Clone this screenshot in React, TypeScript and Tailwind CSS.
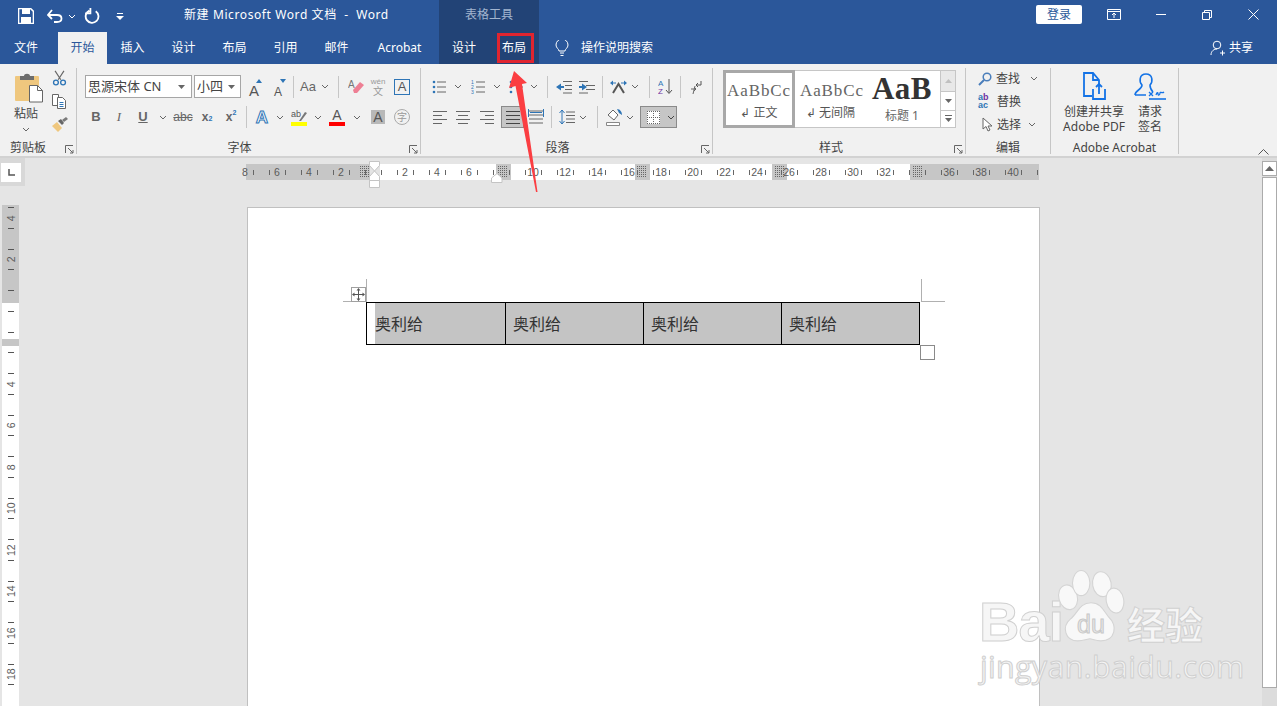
import React from "react";

const Chev = ({ c = "#666" }: { c?: string }) => (
  <svg width="8" height="5" viewBox="0 0 8 5" className="shrink-0"><path d="M1 1l3 3 3-3" fill="none" stroke={c} strokeWidth="1" /></svg>
);
const Launcher = () => (
  <svg width="9" height="9" viewBox="0 0 9 9" className="shrink-0"><path d="M.5 8V.5H8M3 3l5 5M8 5v3H5" fill="none" stroke="#666" strokeWidth="1" /></svg>
);
const VDiv = () => <div className="w-px h-[22px] bg-[#c6c6c6]" />;
const Lines = ({ rows, c = "#666" }: { rows: number[][]; c?: string }) => (
  <svg width="16" height="16" viewBox="0 0 16 16" className="shrink-0">
    {rows.map((r, i) => <rect key={i} x={r[0]} y={r[1]} width={r[2]} height="1" fill={c} />)}
  </svg>
);
const FA = ({ size = "text-[15px]" }: { size?: string }) => (
  <span className={`${size} leading-none text-[#555] font-['Liberation_Sans',sans-serif]`}>A</span>
);

const GridMark = () => (
  <svg width="10" height="11" viewBox="0 0 10 11" className="shrink-0">
    {[0, 2, 4, 6, 8, 10].map((y) => <line key={"h" + y} x1="0" x2="10" y1={y + 0.5} y2={y + 0.5} stroke="#555" strokeWidth="1" strokeDasharray="1 1" />)}
    {[0, 2, 4, 6, 8].map((x) => <line key={"v" + x} y1="0" y2="11" x1={x + 0.5} x2={x + 0.5} stroke="#666" strokeWidth="1" strokeDasharray="1 1" />)}
  </svg>
);

const hNums = ["8", "6", "4", "2", "", "2", "4", "6", "", "10", "12", "14", "16", "18", "20", "22", "24", "26", "28", "30", "32", "", "36", "38", "40", ""];

function HRuler() {
  return (
    <div className="relative ml-[221px] mt-[6px] w-[793px] h-[16px] flex">
      <div className="w-[124px] bg-[#c6c6c6]" />
      <div className="w-[10px] bg-[#e4e4e4]" />
      <div className="w-[116px] bg-white" />
      <div className="w-[15px] bg-[#c6c6c6]" />
      <div className="w-[124px] bg-white" />
      <div className="w-[15px] bg-[#c6c6c6]" />
      <div className="w-[122px] bg-white" />
      <div className="w-[15px] bg-[#c6c6c6]" />
      <div className="w-[123px] bg-white" />
      <div className="w-[129px] bg-[#c6c6c6]" />
      <div className="absolute inset-0 flex">
        <div className="flex -ml-[17px] shrink-0">
          {hNums.map((n, i) => (
            <div key={i} className="w-[32px] shrink-0 flex items-center justify-between h-[16px]">
              <span className={`w-px h-[5px] ml-[7.5px] ${i === 0 ? "bg-transparent" : "bg-[#666]"}`} />
              <span className="text-[10.5px] leading-none text-[#5a5a5a] font-['Liberation_Sans',sans-serif]">{n}</span>
              <span className={`w-px h-[5px] mr-[7.5px] ${i === hNums.length - 1 ? "bg-transparent" : "bg-[#666]"}`} />
            </div>
          ))}
        </div>
      </div>
      <div className="absolute left-[114px] top-[2px]"><GridMark /></div>
      <div className="absolute left-[252px] top-[2px]"><GridMark /></div>
      <div className="absolute left-[391px] top-[2px]"><GridMark /></div>
      <div className="absolute left-[529px] top-[2px]"><GridMark /></div>
      <div className="absolute left-[667px] top-[2px]"><GridMark /></div>
      <svg className="absolute left-[123px] -top-[3px]" width="12" height="28" viewBox="0 0 12 28">
        <path d="M.5.5h10v4L5.500 10 .5 4.500zM5.500 10l5 5.500v4H.5v-4zM.5 19.500h10v7H.5z" fill="#fff" stroke="#c4c4c4" />
      </svg>
      <svg className="absolute left-[245px] top-[9px]" width="12" height="10" viewBox="0 0 12 10">
        <path d="M.5 9.500V5L6 .5 11 5v4.500z" fill="#fff" stroke="#c4c4c4" />
      </svg>
    </div>
  );
}

const vNums = ["4", "2", "", "", "4", "6", "8", "10", "12", "14", "16", "18"];
function VRuler() {
  return (
    <div className="relative ml-[2px] mt-[19px] w-[17px] h-[501px] flex flex-col overflow-hidden">
      <div className="h-[98px] bg-[#c6c6c6] shrink-0" />
      <div className="h-[36px] bg-white shrink-0" />
      <div className="h-[7px] bg-[#c6c6c6] shrink-0" />
      <div className="flex-1 bg-white" />
      <div className="absolute inset-x-0 -top-[8px] flex flex-col">
        {vNums.map((n, i) => (
          <div key={i} className="h-[41.5px] shrink-0 flex flex-col items-center justify-between py-[10px]">
            <span className="w-[6px] h-px bg-[#555]" />
            <span className="text-[10.5px] leading-none text-[#5a5a5a] -rotate-90 font-['Liberation_Sans',sans-serif]">{n}</span>
            <span className="w-[6px] h-px bg-[#555]" />
          </div>
        ))}
      </div>
    </div>
  );
}

function Group({ w, label, launcher, children, labelClass = "" }: { w: string; label: string; launcher?: boolean; children: React.ReactNode; labelClass?: string }) {
  return (
    <div className={`${w} shrink-0 h-[86px] mt-[4px] border-r border-[#c6c6c6] flex flex-col relative`}>
      <div className="h-[70px] shrink-0">{children}</div>
      <div className={`h-[20px] shrink-0 flex items-center justify-center text-[12px] text-[#444] ${labelClass}`}>{label}</div>
      {launcher && <div className="absolute right-[2px] bottom-0 flex"><Launcher /></div>}
    </div>
  );
}

function Clipboard() {
  return (
    <div className="flex h-full">
      <div className="w-[44px] ml-[4px] flex flex-col items-center">
        <svg width="30" height="31" viewBox="0 0 30 31" className="mt-[4px] ml-[6px] shrink-0">
          <rect x="1" y="4" width="24" height="25" rx="1" fill="#efc77e" />
          <path d="M6 4h4c0-3 6-3 6 0h4v4H6z" fill="#6d6d6d" />
          <path d="M15.500 13.500h8l5 5v11.500h-13z" fill="#fff" stroke="#666" />
          <path d="M23.500 13.500v5h5" fill="none" stroke="#666" />
        </svg>
        <span className="text-[12px] leading-[16px] text-[#444] mt-[3px]">粘贴</span>
        <div className="mt-[5px] flex"><Chev /></div>
      </div>
      <div className="w-[20px] flex flex-col items-center ml-px">
        <svg width="15" height="16" viewBox="0 0 16 18" className="mt-[2px] shrink-0">
          <path d="M3 1l6.500 10M13 1L6.500 11" stroke="#666" strokeWidth="1.300" fill="none" />
          <circle cx="4" cy="14" r="2.700" fill="none" stroke="#2e75b6" strokeWidth="1.500" />
          <circle cx="12" cy="14" r="2.700" fill="none" stroke="#2e75b6" strokeWidth="1.500" />
        </svg>
        <svg width="16" height="16" viewBox="0 0 16 16" className="mt-[7px] shrink-0">
          <path d="M1.500 1.500h6v11h-6z" fill="#fff" stroke="#666" />
          <path d="M6.500 4.500h5l3 3v8h-8z" fill="#fff" stroke="#666" />
          <path d="M8.500 9.500h4M8.500 11.500h4M8.500 13.500h4" stroke="#2e75b6" />
        </svg>
        <svg width="17" height="15" viewBox="0 0 17 15" className="mt-[8px] shrink-0">
          <path d="M1 9l5-4 5 6-4 4z" fill="#efc77e" />
          <path d="M7 4l3-2 3 4-2 2z" fill="#666" />
          <path d="M11 3l4-3 2 2-4 3z" fill="#7a7a7a" />
        </svg>
      </div>
    </div>
  );
}

function FontGroup() {
  return (
    <div className="flex flex-col pl-[8px]">
      <div className="flex items-center h-[23px] mt-[7px]">
        <div className="w-[107px] h-[23px] border border-[#a6a6a6] bg-white flex items-center justify-between pl-[2px] pr-[6px] text-[13px] text-[#444]">
          <span>思源宋体 CN</span>
          <svg width="7" height="4" viewBox="0 0 7 4"><path d="M0 0h7L3.500 4z" fill="#666" /></svg>
        </div>
        <div className="w-[47px] ml-[2px] h-[23px] border border-[#a6a6a6] bg-white flex items-center justify-between pl-[2px] pr-[5px] text-[13px] text-[#444]">
          <span>小四</span>
          <svg width="7" height="4" viewBox="0 0 7 4"><path d="M0 0h7L3.500 4z" fill="#666" /></svg>
        </div>
        <div className="w-[1px]" />
        <div className="w-[24px] h-[22px] flex items-end justify-center relative"><FA size="text-[15px]" /><svg className="absolute right-[4px] top-[3px]" width="6" height="4" viewBox="0 0 6 4"><path d="M0 4l3-4 3 4z" fill="#2e75b6" /></svg></div>
        <div className="w-[24px] h-[22px] flex items-end justify-center relative"><FA size="text-[12px]" /><svg className="absolute right-[4px] top-[3px]" width="6" height="4" viewBox="0 0 6 4"><path d="M0 0l3 4 3-4z" fill="#2e75b6" /></svg></div>
        <div className="w-[6px] flex justify-center"><VDiv /></div>
        <div className="w-[24px] flex justify-center text-[13px] text-[#666] font-['Liberation_Sans',sans-serif]">Aa</div>
        <div className="w-[10px] flex justify-center"><Chev /></div>
        <div className="w-[16px] flex justify-center"><VDiv /></div>
        <div className="w-[20px] flex justify-center">
          <svg width="16" height="17" viewBox="0 0 16 17"><text x="0" y="10" fontSize="10" fill="#777" fontFamily="Liberation Sans">A</text><path d="M5 12l7-8 4 3-7 8H6z" fill="#ee7f94" /></svg>
        </div>
        <div className="w-[24px] flex flex-col items-center leading-none text-[#999]">
          <span className="text-[8px] leading-[9px] font-['Liberation_Sans',sans-serif]">wén</span>
          <span className="text-[10px] leading-[11px]">文</span>
        </div>
        <div className="w-[24px] flex justify-center">
          <div className="w-[16px] h-[16px] border border-[#2e75b6] flex items-center justify-center"><FA size="text-[13px]" /></div>
        </div>
      </div>
      <div className="flex items-center h-[22px] mt-[8px] text-[#666]">
        <div className="w-[22px] flex justify-center text-[13px] font-bold font-['Liberation_Sans',sans-serif]">B</div>
        <div className="w-[24px] flex justify-center text-[13px] italic font-['Liberation_Serif',serif]">I</div>
        <div className="w-[24px] flex justify-center text-[13px] font-bold underline font-['Liberation_Sans',sans-serif]">U</div>
        <div className="w-[16px] flex justify-center"><Chev /></div>
        <div className="w-[24px] flex justify-center text-[12px] line-through font-['Liberation_Sans',sans-serif]">abc</div>
        <div className="w-[24px] flex justify-center items-baseline text-[12px] font-bold font-['Liberation_Sans',sans-serif]">x<span className="text-[7px] text-[#2e75b6]">2</span></div>
        <div className="w-[24px] flex justify-center items-start text-[12px] font-bold font-['Liberation_Sans',sans-serif]">x<span className="text-[7px] text-[#2e75b6]">2</span></div>
        <div className="w-[7px] flex justify-center"><VDiv /></div>
        <div className="w-[24px] flex justify-center">
          <span className="text-[17px] leading-none font-bold text-white [-webkit-text-stroke:1px_#2e75b6] font-['Liberation_Sans',sans-serif]">A</span>
        </div>
        <div className="w-[12px] flex justify-center"><Chev /></div>
        <div className="w-[26px] flex flex-col items-center">
          <svg width="16" height="13" viewBox="0 0 16 13"><text x="0" y="8" fontSize="9" fill="#555" fontFamily="Liberation Sans">ab</text><path d="M8 12l6-9 2 1-6 8z" fill="#777" /></svg>
          <div className="w-[16px] h-[4px] bg-[#ffff00]" />
        </div>
        <div className="w-[12px] flex justify-center"><Chev /></div>
        <div className="w-[26px] flex flex-col items-center">
          <span className="text-[14px] leading-[13px] font-['Liberation_Sans',sans-serif] text-[#555]">A</span>
          <div className="w-[16px] h-[4px] bg-[#ff0000]" />
        </div>
        <div className="w-[14px] flex justify-center"><Chev /></div>
        <div className="w-[28px] flex justify-center">
          <div className="w-[14px] h-[14px] bg-[#b8b8b8] flex items-center justify-center"><FA size="text-[14px]" /></div>
        </div>
        <div className="w-[20px] flex justify-center">
          <div className="w-[16px] h-[16px] rounded-full border border-[#aaa] flex items-center justify-center text-[10px] text-[#999]">字</div>
        </div>
      </div>
    </div>
  );
}

const blueDots = (
  <>
    <circle cx="2" cy="3" r="1.300" fill="#2e75b6" /><circle cx="2" cy="8" r="1.300" fill="#2e75b6" /><circle cx="2" cy="13" r="1.300" fill="#2e75b6" />
  </>
);

function ParaGroup() {
  return (
    <div className="flex flex-col pl-[8px]">
      <div className="flex items-center h-[23px] mt-[7px]">
        <div className="w-[20px] flex justify-center"><svg width="14" height="16" viewBox="0 0 14 16">{blueDots}<path d="M5 3h9M5 8h9M5 13h9" stroke="#666" /></svg></div>
        <div className="w-[18px] flex justify-center"><Chev /></div>
        <div className="w-[22px] flex justify-center"><svg width="14" height="16" viewBox="0 0 14 16"><path d="M5 3h9M5 8h9M5 13h9" stroke="#666" /><text x="0" y="5" fontSize="5" fill="#2e75b6" fontFamily="Liberation Sans">1</text><text x="0" y="10" fontSize="5" fill="#2e75b6" fontFamily="Liberation Sans">2</text><text x="0" y="15" fontSize="5" fill="#2e75b6" fontFamily="Liberation Sans">3</text></svg></div>
        <div className="w-[16px] flex justify-center"><Chev /></div>
        <div className="w-[22px] flex justify-center"><svg width="14" height="16" viewBox="0 0 14 16">{blueDots}<path d="M5 3h9M7 8h7M9 13h5" stroke="#666" /></svg></div>
        <div className="w-[14px] flex justify-center"><Chev /></div>
        <div className="w-[12px] flex justify-center"><VDiv /></div>
        <div className="w-[22px] flex justify-center"><svg width="16" height="14" viewBox="0 0 16 14"><path d="M7 1.500h9M9 5.500h7M9 9.500h7M7 13h9" stroke="#666" /><path d="M0 7l5-3.500v2.500h3v2H5v2.500z" fill="#2e75b6" /></svg></div>
        <div className="w-[24px] flex justify-center"><svg width="16" height="14" viewBox="0 0 16 14"><path d="M0 1.500h9M7 5.500h9M7 9.500h9M0 13h9" stroke="#666" /><path d="M8 7L3 3.500v2.500H0v2h3v2.500z" fill="#2e75b6" /></svg></div>
        <div className="w-[6px] flex justify-center"><VDiv /></div>
        <div className="w-[26px] flex justify-center"><svg width="17" height="14" viewBox="0 0 17 14"><path d="M3 13L8.500 4 14 13" fill="none" stroke="#555" strokeWidth="2" /><path d="M0 3l3-2.500v5zM17 3l-3-2.500v5z" fill="#2e75b6" /><path d="M3 3h3M11 3h3" stroke="#2e75b6" /></svg></div>
        <div className="w-[8px] flex justify-center"><Chev /></div>
        <div className="w-[20px] flex justify-center"><VDiv /></div>
        <div className="w-[12px] flex justify-center"><svg width="15" height="16" viewBox="0 0 15 16" className="shrink-0"><text x="0" y="7" fontSize="8" fill="#2e75b6" fontFamily="Liberation Sans">A</text><text x="0" y="15" fontSize="8" fill="#7030a0" fontFamily="Liberation Sans">Z</text><path d="M11 0v14M8 11l3 3.500 3-3.500" fill="none" stroke="#555" /></svg></div>
        <div className="w-[18px] flex justify-center"><VDiv /></div>
        <div className="w-[14px] flex justify-center"><svg width="12" height="14" viewBox="0 0 12 14" className="shrink-0"><path d="M11 1v4H6M8 3L6 5l2 2" fill="none" stroke="#555" /><path d="M1 9h5M4 7l2 2-2 2M5 6L3 14" fill="none" stroke="#666" /></svg></div>
      </div>
      <div className="flex items-center h-[22px] mt-[8px]">
        <div className="w-[22px] flex justify-center"><Lines rows={[[1, 2, 14], [1, 6, 9], [1, 10, 14], [1, 14, 9]]} /></div>
        <div className="w-[24px] flex justify-center"><Lines rows={[[1, 2, 14], [3, 6, 10], [1, 10, 14], [3, 14, 10]]} /></div>
        <div className="w-[24px] flex justify-center"><Lines rows={[[1, 2, 14], [6, 6, 9], [1, 10, 14], [6, 14, 9]]} /></div>
        <div className="w-[2px]" />
        <div className="w-[23px] h-[22px] bg-[#c6c6c6] border border-[#8a8a8a] flex items-center justify-center"><Lines c="#444" rows={[[1, 2, 14], [1, 6, 14], [1, 10, 14], [1, 14, 14]]} /></div>
        <div className="w-[24px] flex justify-center"><svg width="16" height="16" viewBox="0 0 16 16"><path d="M1 2h14M1 6h14M1 10h14M1 14h14" stroke="#666" /><path d="M.5 0v8M15.500 0v8M2 3.500h12" stroke="#2e75b6" /></svg></div>
        <div className="w-[7px] flex justify-center"><VDiv /></div>
        <div className="w-[24px] flex justify-center"><svg width="16" height="16" viewBox="0 0 16 16"><path d="M7 3h9M7 6.500h9M7 10h9M7 13.500h9" stroke="#666" /><path d="M3 1v14M.5 4L3 1l2.500 3M.5 12L3 15l2.500-3" fill="none" stroke="#2e75b6" /></svg></div>
        <div className="w-[8px] flex justify-center"><Chev /></div>
        <div className="w-[20px] flex justify-center"><VDiv /></div>
        <div className="w-[14px] flex justify-center"><svg width="17" height="18" viewBox="0 0 17 18" className="shrink-0"><path d="M2 7l5-5 5 5-4 5z" fill="#fff" stroke="#666" /><path d="M11 1c3 0 5 3 5 6l-3-2z" fill="#2e75b6" /><path d="M.5 14.500h13v3H.5z" fill="#fff" stroke="#888" /></svg></div>
        <div className="w-[18px] flex justify-center"><Chev /></div>
        <div className="w-[1px]" />
        <div className="w-[37px] h-[22px] bg-[#c6c6c6] border border-[#8a8a8a] flex items-center">
          <div className="w-[25px] flex justify-center"><svg width="13" height="13" viewBox="0 0 13 13"><rect width="13" height="13" fill="#fff" /><path d="M.5 0v13M6.500 0v13M12.500 0v13M0 .5h13M0 6.500h13M0 12.500h13" stroke="#666" strokeDasharray="1 1" /></svg></div>
          <div className="w-[10px] flex justify-center ml-px"><Chev c="#444" /></div>
        </div>
      </div>
    </div>
  );
}

function StylesGroup() {
  return (
    <div className="pl-[10px] pt-[2px]">
      <div className="w-[233px] h-[58px] border border-[#c6c6c6] bg-white flex">
        <div className="w-[72px] h-[58px] -mt-px -ml-px border-[3px] border-[#a8a8a8] shrink-0 flex flex-col items-center overflow-hidden">
          <span className="text-[17px] leading-[20px] mt-[8px] text-[#666] tracking-[0.9px] whitespace-nowrap font-['Liberation_Serif',serif]">AaBbCc</span>
          <span className="text-[12px] leading-[16px] mt-[4px] text-[#555] whitespace-nowrap">↲ 正文</span>
        </div>
        <div className="w-[71px] shrink-0 flex flex-col items-center overflow-hidden">
          <span className="text-[17px] leading-[20px] mt-[10px] ml-[5px] self-start text-[#666] tracking-[0.9px] whitespace-nowrap font-['Liberation_Serif',serif]">AaBbCc</span>
          <span className="text-[12px] leading-[16px] mt-[4px] text-[#555] whitespace-nowrap">↲ 无间隔</span>
        </div>
        <div className="w-[72px] shrink-0 flex flex-col items-center overflow-hidden">
          <span className="text-[31px] leading-[32px] mt-[2px] font-bold text-[#333] tracking-[0.5px] font-['Liberation_Serif',serif]">AaB</span>
          <span className="text-[12px] leading-[16px] mt-[3px] text-[#666]">标题 1</span>
        </div>
        <div className="w-[15px] ml-auto shrink-0 border-l border-[#c6c6c6] flex flex-col">
          <div className="h-[21px] bg-[#e8e8e8] flex items-center justify-center"><svg width="7" height="4" viewBox="0 0 7 4"><path d="M0 4l3.500-4L7 4z" fill="#c0c0c0" /></svg></div>
          <div className="h-[19px] border-t border-[#c6c6c6] flex items-center justify-center"><svg width="7" height="4" viewBox="0 0 7 4"><path d="M0 0l3.500 4L7 0z" fill="#666" /></svg></div>
          <div className="h-[18px] border-t border-[#c6c6c6] flex items-center justify-center"><svg width="7" height="7" viewBox="0 0 7 7"><path d="M0 .5h7" stroke="#666" /><path d="M0 3l3.500 4L7 3z" fill="#666" /></svg></div>
        </div>
      </div>
    </div>
  );
}

function EditingGroup() {
  return (
    <div className="flex flex-col pl-[12px] text-[12px] text-[#444]">
      <div className="h-[23px] flex items-center mt-[-1px]">
        <svg width="14" height="14" viewBox="0 0 14 14" className="shrink-0"><circle cx="9" cy="5" r="3.800" fill="none" stroke="#4a7ebb" strokeWidth="1.500" /><path d="M6 8l-5 5" stroke="#4a7ebb" strokeWidth="2" /></svg>
        <span className="ml-[4px] w-[34px]">查找</span>
        <Chev />
      </div>
      <div className="h-[23px] flex items-center">
        <div className="w-[16px] flex flex-col text-[9px] font-bold font-['Liberation_Sans',sans-serif]">
          <span className="leading-[7px]"><span className="text-[#2e75b6]">a</span><span className="text-[#7030a0]">b</span></span>
          <span className="leading-[8px] text-[#2e75b6]">ac</span>
        </div>
        <span className="ml-[3px]">替换</span>
      </div>
      <div className="h-[23px] flex items-center">
        <svg width="11" height="15" viewBox="0 0 11 15" className="shrink-0 ml-[4px]"><path d="M1 1v11l3-2.500L6 14l2-1-2-4h4z" fill="#fff" stroke="#666" /></svg>
        <span className="ml-[4px] w-[31px]">选择</span>
        <Chev />
      </div>
    </div>
  );
}

function AcrobatGroup() {
  return (
    <div className="flex pl-[8px] text-[12px] leading-[15px] text-[#444] text-center">
      <div className="w-[70px] flex flex-col items-center">
        <svg width="24" height="28" viewBox="0 0 24 28" className="mt-[4px] shrink-0">
          <path d="M10 24H2V1h9l6 7v4M11 1v7h6" fill="none" stroke="#1473e6" strokeWidth="1.800" />
          <path d="M11 17v10h12V17M17 22v-9M14 15l3-3 3 3" fill="none" stroke="#1473e6" strokeWidth="1.800" />
        </svg>
        <span className="mt-[4px] whitespace-nowrap">创建并共享</span>
        <span className="whitespace-nowrap">Adobe PDF</span>
      </div>
      <div className="w-[42px] flex flex-col items-center">
        <svg width="32" height="28" viewBox="0 0 32 28" className="mt-[4px] shrink-0">
          <path d="M1 23c0-5 7-5 7-10-3-3-3-11 4-11s7 8 4 11c0 3 1 5 3 7M1 23h11" fill="none" stroke="#1473e6" strokeWidth="1.600" />
          <path d="M15 20l4 4M19 20l-4 4M22 23c1-3 2-3 2-1s2 1 2-1 2 1 4-1" fill="none" stroke="#1473e6" strokeWidth="1.300" />
          <path d="M15 27h17" stroke="#1473e6" strokeWidth="1.600" />
        </svg>
        <span className="mt-[4px] whitespace-nowrap">请求</span>
        <span className="whitespace-nowrap">签名</span>
      </div>
    </div>
  );
}

function Watermark() {
  return (
    <div className="absolute left-[978px] top-[568px] w-[236px] h-[116px] pointer-events-none">
      <div className="absolute left-[1px] top-[32px] text-[56px] leading-[44px] font-bold text-[#f6f6f6] [-webkit-text-stroke:1px_#d0d0d0] tracking-[-1px] font-['Liberation_Sans',sans-serif]">Bai</div>
      <svg className="absolute left-[79px] top-[2px]" width="68" height="72" viewBox="8 1 60 66">
        <g fill="#f8f8f8" stroke="#d4d4d4" strokeWidth="1">
          <ellipse cx="17" cy="26" rx="8.500" ry="11.500" transform="rotate(-15 17 26)" />
          <ellipse cx="29" cy="13" rx="8" ry="11.500" />
          <ellipse cx="48" cy="14" rx="8.500" ry="11.500" transform="rotate(-10 48 14)" />
          <ellipse cx="60" cy="29" rx="8" ry="11.500" transform="rotate(-10 60 29)" />
          <path d="M38 31c10 0 12 9 17 14 7 6 6 21-8 21-5 0-8-2-10-2s-6 2-11 2c-12 0-15-13-7-20 7-5 8-15 19-15z" />
        </g>
      </svg>
      <div className="absolute left-[91px] top-[42px] w-[44px] text-center text-[25px] leading-[28px] text-[#e8e8e8] [-webkit-text-stroke:1px_#c8c8c8] font-['Liberation_Sans',sans-serif]">du</div>
      <div className="absolute left-[149px] top-[34px] text-[38px] leading-[44px] font-bold text-[#f6f6f6] [-webkit-text-stroke:1px_#d0d0d0] whitespace-nowrap">经验</div>
      <div className="absolute left-[2px] top-[81px] text-[30.5px] leading-[34px] text-[#f4f4f4] [-webkit-text-stroke:1px_#cfcfcf] whitespace-nowrap tracking-[0.3px] font-['Open_Sans',sans-serif]">jingyan.baidu.com</div>
    </div>
  );
}

const Tab = ({ w, children, active }: { w: string; children: React.ReactNode; active?: boolean }) => (
  <div className={`${w} h-[32px] shrink-0 flex items-center justify-center ${active ? "bg-[#f1f1f1] text-[#2b579a]" : "text-white"}`}>{children}</div>
);

const cellNames = ["奥利给", "奥利给", "奥利给", "奥利给"];

export default function App() {
  return (
    <div className="relative w-[1277px] h-[706px] overflow-hidden bg-[#e5e5e5] text-[12px] font-['Noto_Sans','Noto_Sans_CJK_SC',sans-serif]">
      <header className="h-[64px] bg-[#2b579a] flex flex-col">
        <div className="h-[32px] flex text-white">
          <div className="w-[439px] flex items-center shrink-0">
            <div className="w-[14px]" />
            <svg width="16" height="16" viewBox="0 0 16 16" className="shrink-0 ml-[4px]"><path d="M.5.5h12l3 3v12H.5z" fill="none" stroke="#fff" strokeWidth="1.600" /><rect x="4" y="1" width="8" height="5" fill="#fff" /><rect x="3" y="9" width="10" height="6" fill="#fff" /></svg>
            <svg width="16" height="14" viewBox="0 0 16 14" className="shrink-0 ml-[13px]"><path d="M1 6h9c6 0 6 7 0 7H7M5 1L1 6l4 4" fill="none" stroke="#fff" strokeWidth="1.800" /></svg>
            <div className="ml-[5px] flex"><Chev c="#fff" /></div>
            <svg width="16" height="16" viewBox="0 0 15 15" className="shrink-0 ml-[8px]"><path d="M5 2.500A6 6 0 1 0 11 3M6 0v5H1" fill="none" stroke="#fff" strokeWidth="1.700" /></svg>
            <svg width="8" height="7" viewBox="0 0 8 7" className="shrink-0 ml-[16px]"><path d="M1 .5h6" stroke="#fff" /><path d="M0 3h8L4 7z" fill="#fff" /></svg>
            <span className="ml-[60px] mb-[2px] tracking-[0.6px] whitespace-nowrap">新建 Microsoft Word 文档&nbsp;&nbsp;-&nbsp;&nbsp;Word</span>
          </div>
          <div className="w-[100px] pb-[2px] bg-[#224376] text-[#a3b5cf] flex items-center justify-center shrink-0">表格工具</div>
          <div className="flex-1 flex items-center">
            <div className="ml-auto w-[46px] h-[19px] mt-[-3px] bg-white rounded-[2px] text-[#2b579a] flex items-center justify-center">登录</div>
            <div className="w-[64px] flex justify-center mt-[-3px]">
              <svg width="14" height="11" viewBox="0 0 14 11"><path d="M.5 .5h13v10H.5zM.5 2.500h13M7 9V4.500M5 6l2-2 2 2" fill="none" stroke="#fff" /></svg>
            </div>
            <div className="w-[30px] flex justify-center mt-[-3px]"><div className="w-[10px] h-px bg-white" /></div>
            <div className="w-[62px] flex justify-center mt-[-3px]">
              <svg width="10" height="10" viewBox="0 0 10 10"><path d="M.5 2.500h7v7h-7zM2.500 2.500v-2h7v7h-2" fill="none" stroke="#fff" /></svg>
            </div>
            <div className="w-[31px] flex justify-center mt-[-3px]">
              <svg width="11" height="11" viewBox="0 0 11 11"><path d="M.5.5l10 10M10.500.5l-10 10" stroke="#fff" /></svg>
            </div>
            <div className="w-[8px]" />
          </div>
        </div>
        <div className="h-[32px] flex">
          <Tab w="w-[52px]">文件</Tab>
          <div className="w-[6px]" />
          <Tab w="w-[49px]" active>开始</Tab>
          <Tab w="w-[51px]">插入</Tab>
          <Tab w="w-[51px]">设计</Tab>
          <Tab w="w-[51px]">布局</Tab>
          <Tab w="w-[51px]">引用</Tab>
          <Tab w="w-[51px]">邮件</Tab>
          <Tab w="w-[75px]">Acrobat</Tab>
          <div className="w-[2px]" />
          <div className="w-[100px] flex bg-[#224376] shrink-0">
            <Tab w="w-[50px]">设计</Tab>
            <Tab w="w-[50px]">布局</Tab>
          </div>
          <div className="flex items-center text-white ml-[16px]">
            <svg width="14" height="17" viewBox="0 0 14 17" className="shrink-0"><path d="M4 11c0-2-3-3-3-6a6 6 0 0 1 12 0c0 3-3 4-3 6zM5 13h4M5.500 15.500h3" fill="none" stroke="#fff" /></svg>
            <span className="ml-[12px] whitespace-nowrap">操作说明搜索</span>
          </div>
          <div className="ml-auto flex items-center text-white mr-[24px]">
            <svg width="16" height="16" viewBox="0 0 16 16" className="shrink-0"><circle cx="7" cy="5" r="3.800" fill="none" stroke="#fff" /><path d="M1 15c0-4 3-6 6-6M10 13h5M12.500 10.500v5" fill="none" stroke="#fff" /></svg>
            <span className="ml-[3px]">共享</span>
          </div>
        </div>
      </header>

      <section className="h-[94px] bg-[#f1f1f1] border-b-2 border-[#d2d2d2] flex relative">
        <Group w="w-[77px]" label="剪贴板" launcher labelClass="pr-[20px]"><Clipboard /></Group>
        <Group w="w-[344px]" label="字体" launcher labelClass="pr-[18px]"><FontGroup /></Group>
        <Group w="w-[292px]" label="段落" launcher labelClass="pr-[18px]"><ParaGroup /></Group>
        <Group w="w-[253px]" label="样式" launcher labelClass="pr-[16px]"><StylesGroup /></Group>
        <Group w="w-[85px]" label="编辑"><EditingGroup /></Group>
        <Group w="w-[128px]" label="Adobe Acrobat"><AcrobatGroup /></Group>
        <svg className="absolute right-[8px] bottom-[1px]" width="11" height="6" viewBox="0 0 11 6"><path d="M.5 5.500l5-5 5 5" fill="none" stroke="#555" /></svg>
      </section>

      <main className="h-[548px] flex">
        <aside className="w-[25px] shrink-0 flex flex-col">
          <div className="w-[25px] h-[28px] bg-[#d8d8d8] pt-[5px] pl-px">
            <div className="w-[20px] h-[19px] bg-white flex items-center justify-center">
              <svg width="7" height="7" viewBox="0 0 7 7"><path d="M1 0v6h6" fill="none" stroke="#555" strokeWidth="1.500" /></svg>
            </div>
          </div>
          <VRuler />
        </aside>
        <div className="flex-1 min-w-0 flex flex-col">
          <HRuler />
          <div className="relative ml-[222px] mt-[27px] w-[793px] flex-1 bg-white border border-[#c0c0c0] border-b-0">
            <div className="absolute left-[118px] top-[71px] w-px h-[23px] bg-[#b0b0b0]" />
            <div className="absolute left-[95px] top-[93px] w-[23px] h-px bg-[#b0b0b0]" />
            <div className="absolute left-[673px] top-[71px] w-px h-[23px] bg-[#b0b0b0]" />
            <div className="absolute left-[673px] top-[93px] w-[24px] h-px bg-[#b0b0b0]" />
            <div className="absolute left-[103px] top-[79px] w-[15px] h-[15px] border border-[#a0a0a0] bg-white flex items-center justify-center">
              <svg width="13" height="13" viewBox="0 0 13 13"><path d="M6.500 1v11M1 6.500h11" stroke="#555" /><path d="M6.500 0l2 2.500h-4zM6.500 13l2-2.500h-4zM0 6.500l2.500 2v-4zM13 6.500l-2.500 2v-4z" fill="#555" /></svg>
            </div>
            <div className="ml-[118px] mt-[94px] w-[554px] h-[43px] border border-black grid grid-cols-[138px_138px_138px_138px] text-[16px] text-[#333]">
              {cellNames.map((n, i) => (
                <div key={i} className={`h-full ${i === 0 ? "pl-[8px]" : "border-l border-black"}`}>
                  <div className={`h-full bg-[#c4c4c4] flex items-center pt-px ${i === 0 ? "" : "pl-[7px]"}`}>{n}</div>
                </div>
              ))}
            </div>
            <div className="absolute left-[672px] top-[137px] w-[15px] h-[15px] border border-[#8a8a8a] bg-white" />
          </div>
        </div>
        <aside className="w-[15px] shrink-0 bg-[#dcdcdc] flex flex-col ml-px">
          <div className="mt-[3px] w-[15px] h-[15px] border border-[#ababab] bg-white flex items-center justify-center">
            <svg width="9" height="5" viewBox="0 0 9 5"><path d="M0 5l4.500-5L9 5z" fill="#666" /></svg>
          </div>
          <div className="w-[15px] h-[511px] mt-px border border-[#ababab] bg-white" />
        </aside>
      </main>

      <div className="absolute left-[497px] top-[33px] w-[37px] h-[30px] border-[3px] border-[#e02530]" />
      <svg className="absolute left-[505px] top-[68px]" width="36" height="126" viewBox="0 0 36 126">
        <path d="M9 3L4 20 10.500 18 31 124 32.500 124 17 16 22 15z" fill="#fb3e42" />
      </svg>
      <Watermark />
    </div>
  );
}
